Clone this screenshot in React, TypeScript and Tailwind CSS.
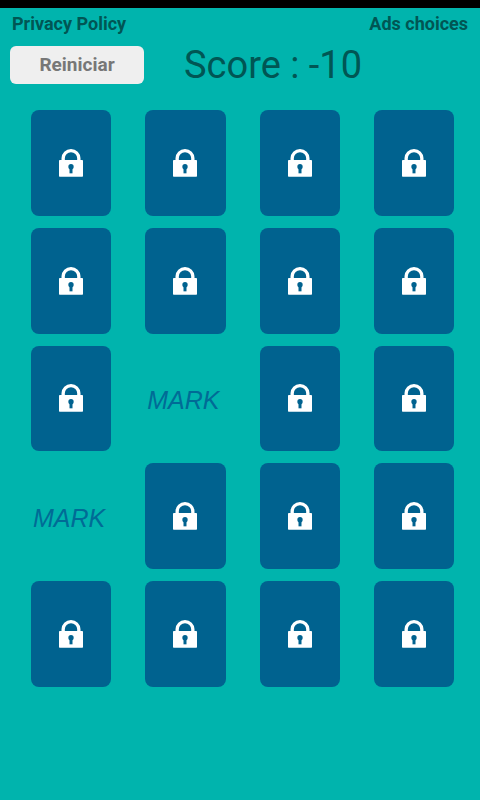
import { useState } from "react";

const WORD = "MARK";
const CARD_COUNT = 20;

function LockIcon() {
  return (
    <svg viewBox="0 0 72 84" className="h-7 w-6" aria-hidden="true">
      <path d="M12.500 36V28A23.500 23 0 0 1 59.500 28V36" fill="none" stroke="#fff" strokeWidth="10" />
      <path
        fill="#fff"
        fillRule="evenodd"
        d="M2 33H70Q72 33 72 35V81Q72 83 70 83H2Q0 83 0 81V35Q0 33 2 33Z"
      />
      <circle cx="36" cy="53" r="8" fill="#00628f" />
      <path d="M31.500 56H40.500V73H31.500Z" fill="#00628f" />
    </svg>
  );
}

function Card({ open, onOpen }: { open: boolean; onOpen: () => void }) {
  return (
    <button
      onClick={onOpen}
      aria-label={open ? WORD : "Card"}
      className={`flex aspect-[22/29] items-center justify-center rounded-lg ${
        open ? "text-[#006b96]" : "bg-[#00628f]"
      }`}
    >
      {open ? (
        <span className="pt-1 pr-1 font-['Liberation_Sans',sans-serif] text-[25px] leading-7 italic">{WORD}</span>
      ) : (
        <LockIcon />
      )}
    </button>
  );
}

export default function App() {
  const [opened, setOpened] = useState<number[]>([9, 12]);
  const [score, setScore] = useState(-10);

  function open(i: number) {
    if (!opened.includes(i)) setOpened([...opened, i]);
  }

  function restart() {
    setOpened([]);
    setScore(0);
  }

  return (
    <div className="min-h-screen border-t-8 border-black bg-[#00b4ad] font-[Roboto,sans-serif] text-[#005654]">
      <nav className="flex justify-between px-3 pt-1 text-[18px] leading-6 font-bold">
        <a href="#privacy">Privacy Policy</a>
        <a href="#ads">Ads choices</a>
      </nav>

      <header className="flex items-center px-[10px] pt-[10px]">
        <button
          onClick={restart}
          className="h-[38px] w-[134px] rounded-md bg-[#efefef] text-[19px] leading-6 font-bold text-[#777777]"
        >
          Reiniciar
        </button>
        <h1 className="ml-10 text-[38px] leading-[38px]">Score : {score}</h1>
      </header>

      <main className="grid grid-cols-4 gap-x-[34px] gap-y-3 pt-[26px] pr-[26px] pl-[31px]">
        {Array.from({ length: CARD_COUNT }, (_, i) => (
          <Card key={i} open={opened.includes(i)} onOpen={() => open(i)} />
        ))}
      </main>
    </div>
  );
}
